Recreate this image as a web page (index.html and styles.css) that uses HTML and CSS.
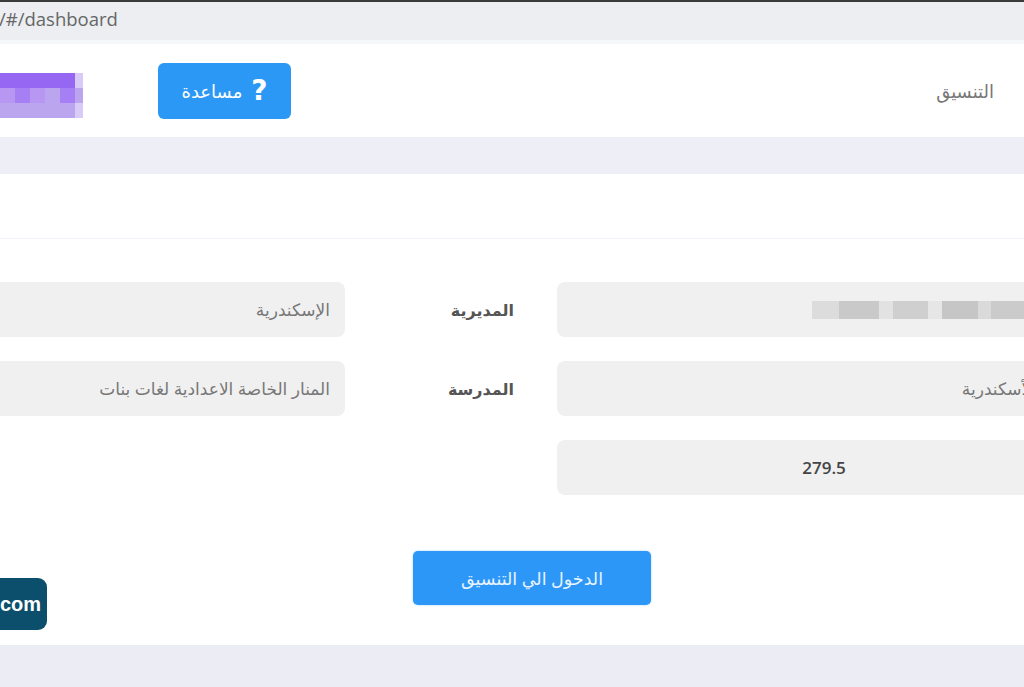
FILE: index.html
```html
<!DOCTYPE html>
<html lang="ar" dir="rtl">
<head>
    <meta charset="UTF-8">
    <meta name="viewport" content="width=device-width, initial-scale=1.0">
    <title>التنسيق</title>
    <link rel="stylesheet" href="styles.css">
</head>
<body>
    <div class="address-bar">
        <span class="url">/#/dashboard</span>
    </div>

    <header class="top-nav">
        <span class="nav-title">التنسيق</span>
        <a href="#" class="help-btn">
            <span class="help-icon">?</span>
            <span>مساعدة</span>
        </a>
        <div class="avatar-blur">
            <span class="px p1"></span><span class="px p1"></span><span class="px p1"></span><span class="px p1"></span><span class="px p1"></span><span class="px p5"></span>
            <span class="px p3"></span><span class="px p2"></span><span class="px p3"></span><span class="px p4"></span><span class="px p2"></span><span class="px p4"></span>
            <span class="px p4"></span><span class="px p4"></span><span class="px p4"></span><span class="px p4"></span><span class="px p4"></span><span class="px p5"></span>
        </div>
    </header>

    <div class="band"></div>

    <main class="content">
        <div class="section-head"></div>

        <div class="form-grid">
            <div class="form-row">
                <div class="field field-main"><span class="redacted"></span></div>
                <label class="field-label">المديرية</label>
                <div class="field">الإسكندرية</div>
            </div>
            <div class="form-row">
                <div class="field field-main">الأسكندرية</div>
                <label class="field-label">المدرسة</label>
                <div class="field">المنار الخاصة الاعدادية لغات بنات</div>
            </div>
            <div class="form-row">
                <div class="field field-main field-score">279.5</div>
            </div>
        </div>

        <div class="actions">
            <button class="enter-btn">الدخول الي التنسيق</button>
        </div>
    </main>

    <div class="footer-band"></div>

    <div class="watermark">com</div>
</body>
</html>
```

FILE: styles.css
```css
html, body {
    margin: 0;
    padding: 0;
    overflow: hidden;
    height: 687px;
}
body {
    font-family: "Open Sans", "DejaVu Sans", sans-serif;
    background-color: #ffffff;
    color: #333;
    position: relative;
}

/* browser chrome strip */
.address-bar {
    direction: ltr;
    height: 44px;
    box-sizing: border-box;
    padding-bottom: 5px;
    border-top: 2px solid #3a3a3a;
    border-bottom: 4px solid #f5f7f9;
    background-color: #eceef1;
    display: flex;
    align-items: center;
}
.url {
    font-size: 18.5px;
    color: #666;
    margin-left: -1px;
}

/* header */
.top-nav {
    height: 93px;
    display: flex;
    align-items: center;
    padding-right: 30px;
}
.nav-title {
    font-size: 18px;
    color: #777;
    margin-left: auto;
}
.help-btn {
    display: flex;
    align-items: center;
    gap: 9px;
    width: 133px;
    height: 56px;
    box-sizing: border-box;
    justify-content: center;
    background-color: #2b98f5;
    border-radius: 6px;
    color: #fff;
    text-decoration: none;
    font-size: 18px;
    margin-left: 75px;
}
.help-icon {
    font-family: "DejaVu Sans", sans-serif;
    font-weight: bold;
    font-size: 28px;
    line-height: 1;
}
.avatar-blur {
    display: grid;
    grid-template-columns: repeat(5, 15px) 8px;
    direction: ltr;
    width: 83px;
    height: 45px;
    margin-top: 10px;
}
.px { height: 15px; }
.p1 { background-color: #9567f2; }
.p2 { background-color: #a57ff3; }
.p3 { background-color: #b797f2; }
.p4 { background-color: #bca5ef; }
.p5 { background-color: #d8cbf8; }

.band {
    height: 37px;
    background-color: #eeeef7;
}

/* main form area */
.content {
    height: 471px;
    box-sizing: border-box;
}
.section-head {
    height: 64px;
    border-bottom: 1px solid #f3f1f7;
}
.form-grid {
    margin-top: 43px;
    margin-right: -27px;
    display: flex;
    flex-direction: column;
    gap: 24px;
}
.form-row {
    display: flex;
    height: 55px;
}
.field {
    flex: 0 0 494px;
    box-sizing: border-box;
    height: 55px;
    padding: 0 15px;
    background-color: #f0f0f0;
    border-radius: 8px;
    display: flex;
    align-items: center;
    font-size: 17px;
    color: #777;
    white-space: nowrap;
}
.field-label {
    flex: 0 0 212px;
    box-sizing: border-box;
    padding-right: 43px;
    display: flex;
    align-items: center;
    font-size: 16px;
    font-weight: bold;
    color: #555;
}
.redacted {
    width: 224px;
    height: 18px;
    background: linear-gradient(90deg,
        #dcdcdc 0 12%, #c9c9c9 12% 30%, #e2e2e2 30% 36%, #cfcfcf 36% 52%,
        #e6e6e6 52% 58%, #c6c6c6 58% 74%, #dadada 74% 80%, #cbcbcb 80% 100%);
}
.field-score {
    justify-content: center;
    padding: 0 0 0 40px;
    direction: ltr;
    font-size: 17px;
    font-weight: 600;
    color: #444;
}

.actions {
    display: flex;
    justify-content: center;
    margin-top: 56px;
    padding-left: 40px;
}
.enter-btn {
    width: 238px;
    height: 54px;
    border: none;
    border-radius: 5px;
    background-color: #2d97f8;
    color: #e9f4ff;
    font-family: inherit;
    font-size: 17.5px;
    box-shadow: 0 0 2px rgba(45, 151, 248, 0.5);
}

.footer-band {
    height: 42px;
    background-color: #ececf5;
}

/* video watermark */
.watermark {
    position: absolute;
    left: 0;
    top: 578px;
    width: 47px;
    height: 52px;
    box-sizing: border-box;
    padding-right: 6px;
    background-color: #0b4f6c;
    border-radius: 0 9px 9px 0;
    color: #fff;
    font-family: "Liberation Sans", sans-serif;
    font-weight: bold;
    font-size: 20px;
    display: flex;
    align-items: center;
    justify-content: flex-end;
    overflow: hidden;
}
```
